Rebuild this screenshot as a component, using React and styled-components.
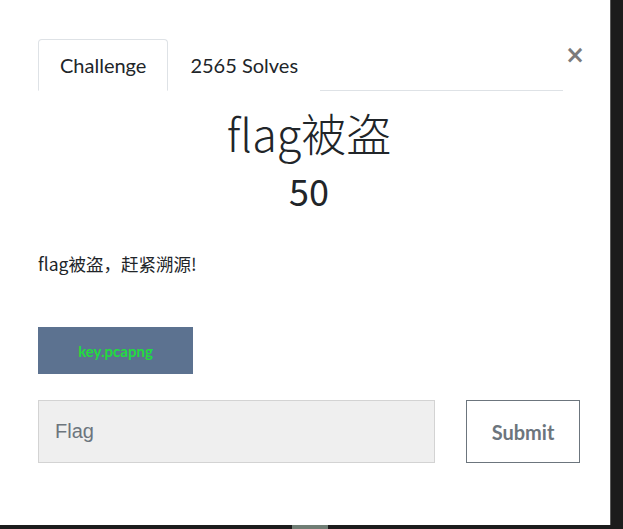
import React from "react";
import styled, { createGlobalStyle } from "styled-components";

const Global = createGlobalStyle`
  html, body {
    margin: 0;
    padding: 0;
    background: #1c1c1c;
  }
  * { box-sizing: border-box; }
`;

const Page = styled.div`
  width: 623px;
  height: 529px;
  display: flex;
  flex-direction: column;
  background: #1c1c1c;
  overflow: hidden;
`;

const Row = styled.div`
  display: flex;
  height: 525px;
`;

const Modal = styled.div`
  width: 611px;
  height: 525px;
  background: #fff;
  border-right: 1px solid #5a5a5a;
  padding: 39px 30px 0 38px;
  font-family: Lato, "Noto Sans CJK SC", sans-serif;
  color: #212529;
`;

const BottomBar = styled.div`
  height: 4px;
  display: flex;
`;

const Thumb = styled.div`
  margin-left: 292px;
  width: 36px;
  height: 4px;
  background: #6f7d74;
`;

const Header = styled.div`
  display: flex;
  align-items: flex-start;
`;

const Nav = styled.ul`
  list-style: none;
  margin: 0;
  padding: 0;
  width: 525px;
  flex-shrink: 0;
  display: flex;
  border-bottom: 1px solid #dee2e6;
`;

const Tab = styled.li`
  height: 52px;
  margin-bottom: -1px;
  padding: 0 21px;
  display: flex;
  align-items: center;
  font-size: 20px;
  color: #212529;
  border: 1px solid ${(p) => (p.active ? "#dee2e6" : "transparent")};
  border-bottom-color: ${(p) => (p.active ? "#fff" : "transparent")};
  border-radius: 4px 4px 0 0;
  background: #fff;
`;

const Close = styled.button`
  margin: 4px 0 0 2px;
  padding: 0;
  border: 0;
  background: none;
  font-family: "DejaVu Sans", sans-serif;
  font-size: 24px;
  font-weight: bold;
  line-height: 24px;
  color: #7b7b7b;
`;

const Title = styled.h2`
  margin: 20px 0 0;
  text-align: center;
  font-family: "Noto Sans CJK SC", sans-serif;
  font-weight: 300;
  font-size: 45px;
  line-height: 44px;
`;

const Points = styled.h3`
  margin: 17px 0 0;
  text-align: center;
  font-family: "Noto Sans CJK SC", sans-serif;
  font-weight: 400;
  font-size: 36px;
  line-height: 36px;
`;

const Desc = styled.p`
  margin: 44px 0 0;
  font-family: "Noto Sans CJK SC", sans-serif;
  font-size: 17.5px;
  line-height: 24px;
`;

const FileButton = styled.a`
  display: flex;
  align-items: center;
  justify-content: center;
  margin-top: 51px;
  width: 155px;
  height: 47px;
  background: #5c7290;
  color: #22dc3e;
  font-family: Lato, sans-serif;
  font-weight: bold;
  font-size: 15px;
`;

const Form = styled.div`
  display: flex;
  gap: 31px;
  margin-top: 26px;
`;

const Input = styled.input`
  width: 397px;
  height: 63px;
  flex-shrink: 0;
  padding: 0 16px;
  background: #efefef;
  border: 1px solid #d3d3d3;
  font-family: "Liberation Sans", Arial, sans-serif;
  font-size: 20px;
  color: #495057;
  &::placeholder { color: #6c757d; }
  &:focus { outline: none; }
`;

const Submit = styled.button`
  width: 114px;
  height: 63px;
  flex-shrink: 0;
  background: #fff;
  border: 1px solid #6c757d;
  color: #6c757d;
  font-family: Lato, sans-serif;
  font-weight: bold;
  font-size: 20px;
`;

export default function App() {
  return (
    <Page>
      <Global />
      <Row>
        <Modal>
          <Header>
            <Nav>
              <Tab active>Challenge</Tab>
              <Tab>2565 Solves</Tab>
            </Nav>
            <Close>×</Close>
          </Header>
          <Title>flag被盗</Title>
          <Points>50</Points>
          <Desc>flag被盗，赶紧溯源!</Desc>
          <FileButton>key.pcapng</FileButton>
          <Form>
            <Input placeholder="Flag" />
            <Submit>Submit</Submit>
          </Form>
        </Modal>
      </Row>
      <BottomBar>
        <Thumb />
      </BottomBar>
    </Page>
  );
}
